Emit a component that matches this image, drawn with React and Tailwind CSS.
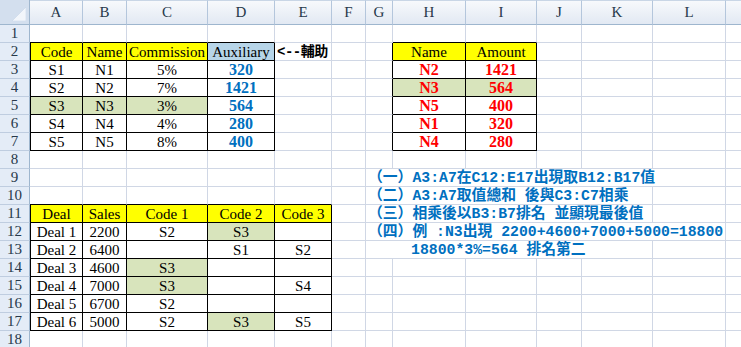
import React from "react";

const COLS = ["A", "B", "C", "D", "E", "F", "G", "H", "I", "J", "K", "L", ""];
const NROWS = 18;

const Y = "bg-[#FFFF00]";
const G = "bg-[#D8E4BC]";
const BL = "bg-[#B7D5E8]";

const blue = "text-[#0070C0] font-bold font-['Liberation_Serif',serif] text-[16px]";
const red = "text-[#FF0000] font-bold font-['Liberation_Serif',serif] text-[16px]";

const cells = {};
function set(r, c, text, opts = {}) {
  cells[`${r},${c}`] = { text, ...opts };
}

set(2, 1, "Code", { bg: Y });
set(2, 2, "Name", { bg: Y });
set(2, 3, "Commission", { bg: Y });
set(2, 4, "Auxiliary", { bg: BL });
set(2, 5, "<--輔助", {
  cls: "font-bold text-black font-['Liberation_Mono','Noto_Sans_CJK_TC',monospace] text-[14px] tracking-[-0.5px]",
  align: "left",
});
set(2, 8, "Name", { bg: Y });
set(2, 9, "Amount", { bg: Y });

const codes = ["S1", "S2", "S3", "S4", "S5"];
const names = ["N1", "N2", "N3", "N4", "N5"];
const pct = ["5%", "7%", "3%", "4%", "8%"];
const aux = ["320", "1421", "564", "280", "400"];
const rn = ["N2", "N3", "N5", "N1", "N4"];
const ra = ["1421", "564", "400", "320", "280"];
for (let i = 0; i < 5; i++) {
  const r = 3 + i;
  const g = r === 5 ? G : "";
  set(r, 1, codes[i], { bg: g });
  set(r, 2, names[i], { bg: g });
  set(r, 3, pct[i], { bg: g });
  set(r, 4, aux[i], { cls: blue });
  const g2 = r === 4 ? G : "";
  set(r, 8, rn[i], { cls: red, bg: g2 });
  set(r, 9, ra[i], { cls: red, bg: g2 });
}

set(11, 1, "Deal", { bg: Y });
set(11, 2, "Sales", { bg: Y });
set(11, 3, "Code 1", { bg: Y });
set(11, 4, "Code 2", { bg: Y });
set(11, 5, "Code 3", { bg: Y });

const sales = ["2200", "6400", "4600", "7000", "6700", "5000"];
const c1 = ["S2", "", "S3", "S3", "S2", "S2"];
const c2 = ["S3", "S1", "", "", "", "S3"];
const c3 = ["", "S2", "", "S4", "", "S5"];
for (let i = 0; i < 6; i++) {
  const r = 12 + i;
  set(r, 1, `Deal ${i + 1}`);
  set(r, 2, sales[i]);
  set(r, 3, c1[i], { bg: c1[i] === "S3" ? G : "" });
  set(r, 4, c2[i], { bg: c2[i] === "S3" ? G : "" });
  set(r, 5, c3[i], { bg: c3[i] === "S3" ? G : "" });
}

const noteCls =
  "text-[#0070C0] font-bold font-['Liberation_Mono','Noto_Sans_CJK_TC',monospace] text-[14.8px]";
set(9, 7, "（一）A3:A7在C12:E17出現取B12:B17值", { cls: noteCls, align: "left", span: 6 });
set(10, 7, "（二）A3:A7取值總和 後與C3:C7相乘", { cls: noteCls, align: "left", span: 5 });
set(11, 7, "（三）相乘後以B3:B7排名 並顯現最後值", { cls: noteCls, align: "left", span: 5 });
set(12, 7, "（四）例 :N3出現 2200+4600+7000+5000=18800", { cls: noteCls, align: "left", span: 6 });
set(13, 7, "18800*3%=564 排名第二", { cls: noteCls + " pl-[45px]", align: "left", span: 5 });

function inTable(r, c) {
  if (r >= 2 && r <= 7 && c >= 1 && c <= 4) return true;
  if (r >= 2 && r <= 7 && c >= 8 && c <= 9) return true;
  if (r >= 11 && r <= 17 && c >= 1 && c <= 5) return true;
  return false;
}

function Corner() {
  return (
    <div className="relative bg-[#D3DFEE] border-r border-b border-r-[#9EB6CE] border-b-[#9EB6CE]">
      <svg className="absolute right-[3px] bottom-[3px]" width="14" height="14" viewBox="0 0 14 14">
        <polygon points="14,0 14,14 0,14" fill="#F2F6FB" stroke="#C3D2E4" strokeWidth="0.5" />
      </svg>
    </div>
  );
}

export default function App() {
  const out = [];
  out.push(<Corner key="corner" />);
  COLS.forEach((L, i) => {
    out.push(
      <div
        key={`h-${i}`}
        className="flex items-center justify-center bg-gradient-to-b from-[#F7F9FC] to-[#E2E9F3] border-r border-b border-r-[#B4C6DC] border-b-[#9EB6CE] border-t border-t-[#C9D6E6] text-[15px] text-[#27384A] font-['Liberation_Serif',serif]"
      >
        {L}
      </div>
    );
  });

  for (let r = 1; r <= NROWS; r++) {
    out.push(
      <div
        key={`rh-${r}`}
        className="flex items-center justify-center bg-[#E4ECF7] border-r border-b border-r-[#9EB6CE] border-b-[#BFCDE0] text-[15px] text-[#27384A] font-['Liberation_Serif',serif] leading-none"
      >
        {r}
      </div>
    );
    let c = 1;
    while (c <= COLS.length) {
      const cell = cells[`${r},${c}`] || {};
      const span = cell.span || 1;
      const last = c + span - 1;
      const rBlack = inTable(r, last) || inTable(r, last + 1);
      let bBlack = false;
      for (let k = c; k <= last; k++) if (inTable(r, k) || inTable(r + 1, k)) bBlack = true;
      const lBlack = c === 1 && inTable(r, c);
      const spanCls = span === 6 ? "col-span-6" : span === 5 ? "col-span-5" : "";
      const alignCls = cell.align === "left" ? "justify-start pl-[2px]" : "justify-center";
      out.push(
        <div
          key={`c-${r}-${c}`}
          className={[
            "flex items-center whitespace-nowrap overflow-visible border-r border-b",
            spanCls,
            alignCls,
            rBlack ? "border-r-black" : "border-r-[#D0D7E5]",
            bBlack ? "border-b-black" : "border-b-[#D0D7E5]",
            lBlack ? "border-l border-l-black" : "",
            cell.bg || "",
            cell.cls || "text-black font-['Liberation_Serif',serif] text-[15px]",
            "leading-none pt-[1px]",
          ].join(" ")}
        >
          {cell.text || ""}
        </div>
      );
      c = last + 1;
    }
  }

  return (
    <div className="w-[741px] h-[347px] overflow-hidden bg-white">
      <div className="grid grid-cols-[30px_53px_44px_81px_67px_57px_34px_27px_73px_71px_45px_71px_73px_73px] grid-rows-[25px_repeat(18,18px)] w-[819px]">
        {out}
      </div>
    </div>
  );
}
